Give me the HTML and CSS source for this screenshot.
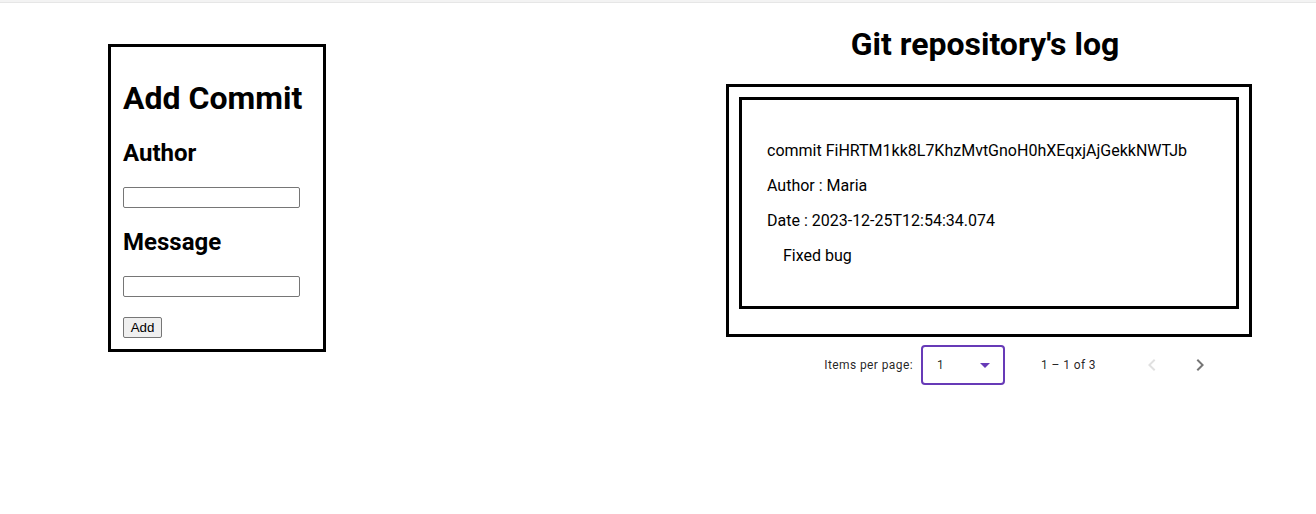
FILE: index.html
```html
<!DOCTYPE html>
<html>
<head>
<meta charset="utf-8">
<link rel="stylesheet" href="styles.css">
</head>
<body>
<div class="topbar"></div>
<div class="page">
  <div class="add-commit">
    <h1 class="title">Add Commit</h1>
    <h2 class="label">Author</h2>
    <input class="field" type="text">
    <h2 class="label">Message</h2>
    <input class="field" type="text">
    <div class="actions"><button class="btn">Add</button></div>
  </div>
  <div class="log">
    <h1 class="log-title">Git repository's log</h1>
    <div class="log-outer">
      <div class="commit">
        <p class="line">commit FiHRTM1kk8L7KhzMvtGnoH0hXEqxjAjGekkNWTJb</p>
        <p class="line">Author : Maria</p>
        <p class="line">Date : 2023-12-25T12:54:34.074</p>
        <p class="line msg">Fixed bug</p>
      </div>
    </div>
    <div class="paginator">
      <div class="page-size">
        <span class="page-size-label">Items per page:</span>
        <div class="select">
          <span class="select-value">1</span>
          <span class="select-arrow"></span>
        </div>
      </div>
      <span class="range">1 – 1 of 3</span>
      <button class="nav disabled" aria-label="Previous page">
        <svg viewBox="0 0 24 24" width="24" height="24"><path d="M15.41 7.41L14 6l-6 6 6 6 1.41-1.41L10.83 12z" fill="currentColor"/></svg>
      </button>
      <button class="nav" aria-label="Next page">
        <svg viewBox="0 0 24 24" width="24" height="24"><path d="M10 6L8.59 7.41 13.17 12l-4.58 4.59L10 18l6-6z" fill="currentColor"/></svg>
      </button>
    </div>
  </div>
</div>
</body>
</html>
```

FILE: styles.css
```css
html, body {
  margin: 0;
  padding: 0;
  background: #fff;
  font-family: Roboto, "Helvetica Neue", sans-serif;
  color: #000;
}

.topbar {
  height: 2px;
  background: #f3f3f3;
  border-bottom: 1px solid #e6e6e6;
}

.page {
  display: flex;
  align-items: flex-start;
}

.add-commit {
  margin-left: 108px;
  margin-top: 41px;
  width: 218px;
  box-sizing: border-box;
  border: 3px solid #000;
  padding: 12px 12px 11px 12px;
}

.title {
  font-size: 32px;
  font-weight: 700;
  margin: 21.44px 0;
  line-height: 37.5px;
}

.label {
  font-size: 24px;
  font-weight: 700;
  margin: 19.92px 0;
  line-height: 28.125px;
}

.field {
  display: block;
  width: 177px;
  height: 21px;
  box-sizing: border-box;
  border: 1px solid #767676;
  border-radius: 2px;
  padding: 1px 2px;
  margin: 0;
  font: 13.333px "Liberation Sans", Arial, sans-serif;
}

.actions {
  margin-top: 20px;
  display: flex;
}

.btn {
  font: 13.333px "Liberation Sans", Arial, sans-serif;
  color: #000;
  background: #efefef;
  border: 1px solid #767676;
  border-radius: 2px;
  padding: 1px 6px;
  height: 21px;
  width: 39px;
  box-sizing: border-box;
  margin: 0;
}

.log {
  margin-left: 400px;
  width: 526px;
  display: flex;
  flex-direction: column;
  align-items: center;
}

.log-title {
  font-size: 32px;
  font-weight: 700;
  line-height: 37.5px;
  margin: 23px 8px 20.5px 0;
  text-align: center;
}

.log-outer {
  width: 526px;
  box-sizing: border-box;
  border: 3px solid #000;
  padding: 10px 10px 25px 10px;
}

.commit {
  width: 500px;
  box-sizing: border-box;
  border: 3px solid #000;
  padding: 25px;
}

.line {
  font-size: 16px;
  line-height: 19px;
  margin: 16px 0;
}

.msg {
  padding-left: 16px;
}

.paginator {
  width: 500px;
  box-sizing: border-box;
  min-height: 56px;
  padding: 0 15px 0 8px;
  display: flex;
  justify-content: flex-end;
  align-items: center;
  font-size: 12px;
  letter-spacing: 0.4px;
  color: rgba(0, 0, 0, 0.87);
}

.page-size {
  display: flex;
  align-items: center;
  margin-right: 8px;
}

.page-size-label {
  margin: 0 4px;
}

.select {
  margin: 0 4px;
  width: 84px;
  height: 40px;
  box-sizing: border-box;
  border: 2px solid #673ab7;
  border-radius: 4px;
  display: flex;
  align-items: center;
  padding: 0 13px 0 14px;
}

.select-value {
  flex: 1;
  font-size: 12px;
}

.select-arrow {
  width: 0;
  height: 0;
  border-left: 5px solid transparent;
  border-right: 5px solid transparent;
  border-top: 5px solid #673ab7;
}

.range {
  margin: 0 32px 0 24px;
}

.nav {
  width: 48px;
  height: 48px;
  padding: 12px;
  border: 0;
  background: none;
  color: rgba(0, 0, 0, 0.54);
  display: flex;
  align-items: center;
  justify-content: center;
  margin: 0;
}

.nav.disabled {
  color: rgba(0, 0, 0, 0.12);
}
```
